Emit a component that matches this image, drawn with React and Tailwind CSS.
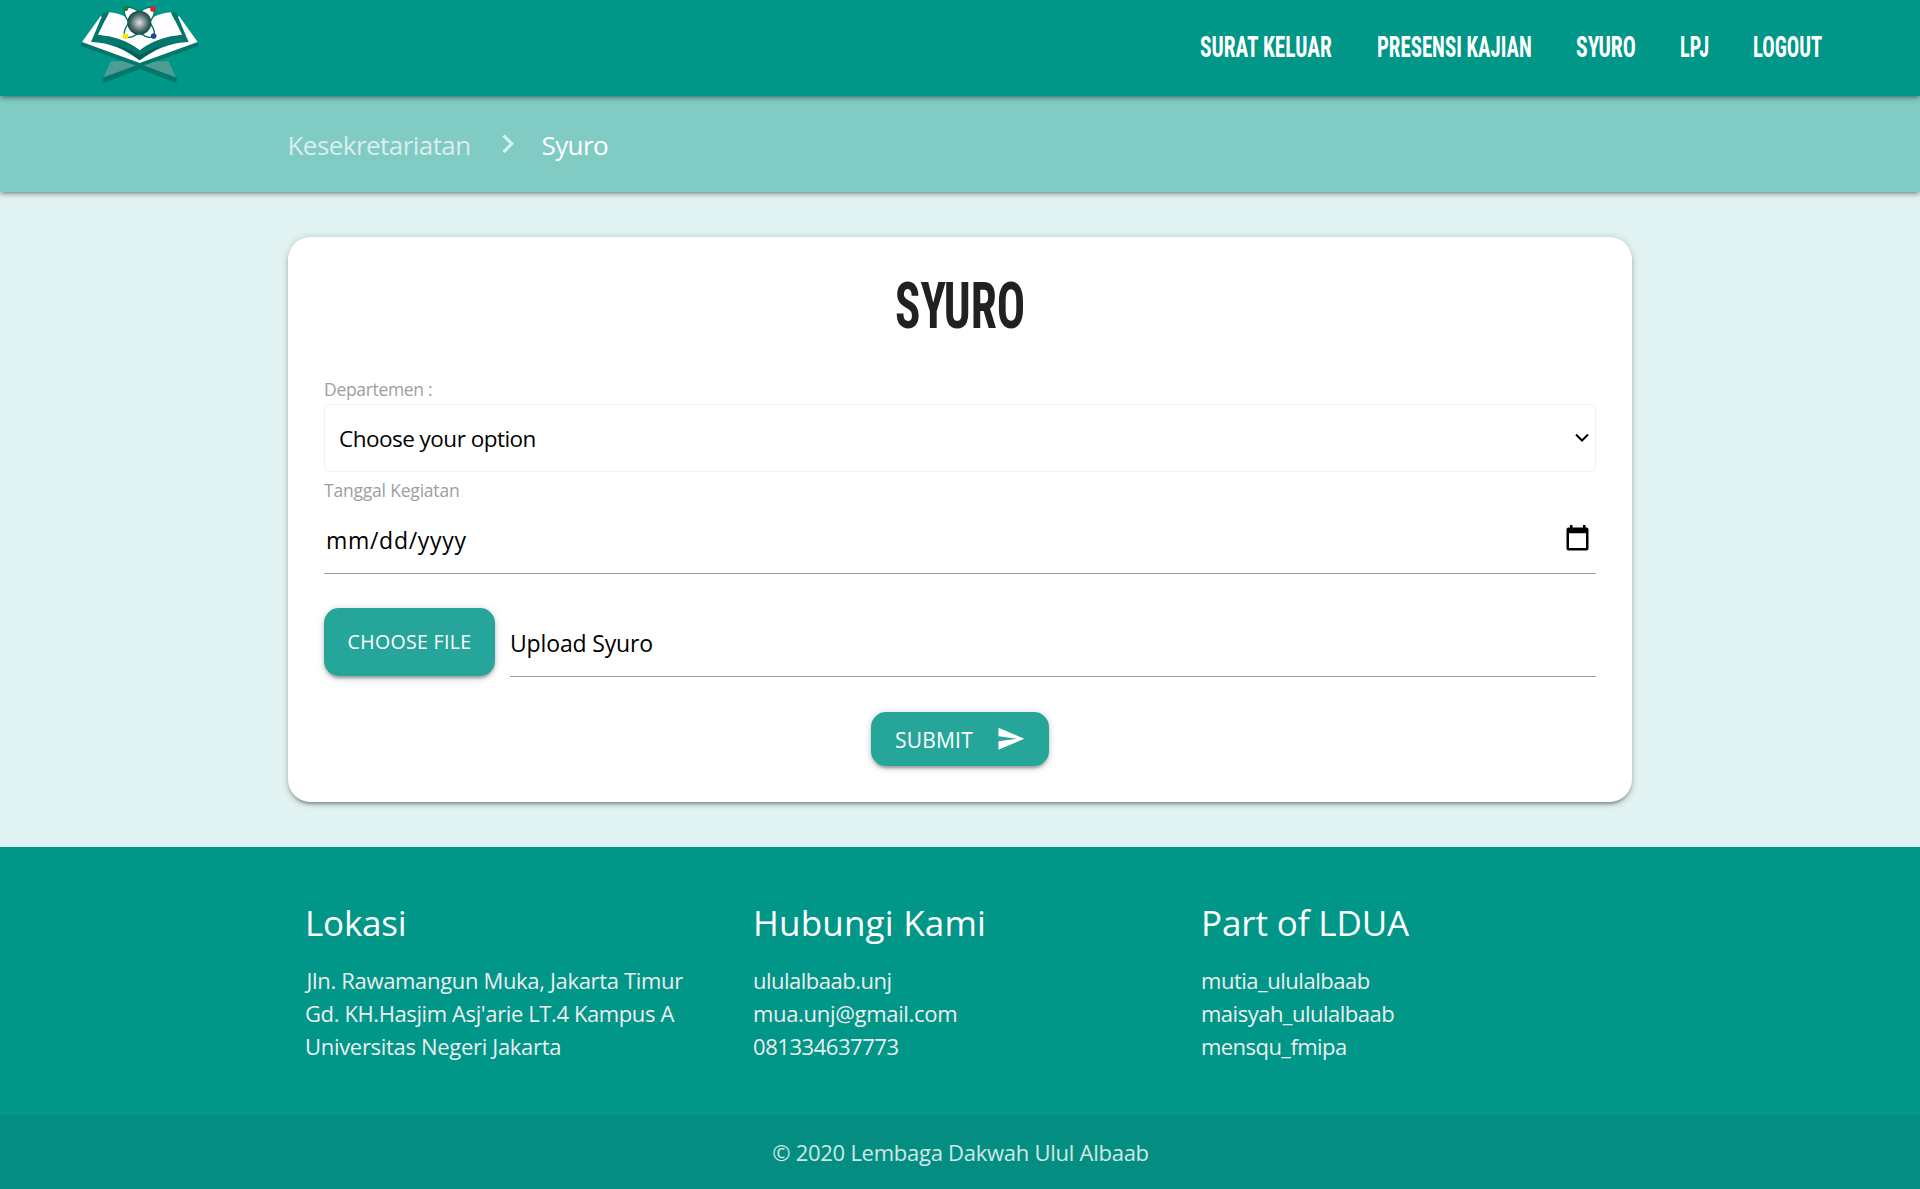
const navItems = [
  { label: "SURAT KELUAR", box: "w-[177px]", fit: "scale-x-[0.725]" },
  { label: "PRESENSI KAJIAN", box: "w-[198.5px]", fit: "scale-x-[0.707]" },
  { label: "SYURO", box: "w-[104px]", fit: "scale-x-[0.734]" },
  { label: "LPJ", box: "w-[73px]", fit: "scale-x-[0.684]" },
  { label: "LOGOUT", box: "w-[72px]", fit: "scale-x-[0.70]" },
];

const columns = [
  {
    title: "Lokasi",
    titleClass: "tracking-[-0.2px]",
    lines: [
      ["Jln. Rawamangun Muka, Jakarta Timur", "tracking-[-0.33px] pl-[1.5px]"],
      ["Gd. KH.Hasjim Asj'arie LT.4 Kampus A", "tracking-[-0.39px]"],
      ["Universitas Negeri Jakarta", "tracking-[-0.31px]"],
    ],
  },
  {
    title: "Hubungi Kami",
    titleClass: "tracking-[0.2px]",
    lines: [
      ["ululalbaab.unj", "tracking-[-0.5px]"],
      ["mua.unj@gmail.com", "tracking-[-0.32px]"],
      ["081334637773", "tracking-[-0.45px]"],
    ],
  },
  {
    title: "Part of LDUA",
    titleClass: "tracking-[-0.13px]",
    lines: [
      ["mutia_ululalbaab", "tracking-[-0.48px]"],
      ["maisyah_ululalbaab", "tracking-[-0.5px]"],
      ["mensqu_fmipa", "tracking-[-0.55px]"],
    ],
  },
];

function Logo() {
  return (
    <svg viewBox="60 0 360 288" className="h-24 w-[120px]">
      <defs>
        <radialGradient id="core" cx="0.5" cy="0.5" r="0.5">
          <stop offset="0" stopColor="#dfe5e4" />
          <stop offset="0.5" stopColor="#7d8b8a" />
          <stop offset="1" stopColor="#163f3c" />
        </radialGradient>
      </defs>
      {/* stand */}
      <path d="M152 184 L200 184 L248 204 L128 238 Z" fill="#4d9d94" />
      <path d="M326 184 L278 184 L230 204 L350 238 Z" fill="#4d9d94" />
      <path d="M127 233 L240 192 L351 233 L349 249 L239 207 L131 249 Z" fill="#04776c" />
      {/* cover */}
      <path d="M66 124 L239 184 L413 124 L417 138 L239 201 L62 138 Z" fill="#04776c" />
      {/* outer pages */}
      <path d="M122 48 L66 126 L239 189 L413 126 L357 48 L345 60 L135 60 Z" fill="#fff" />
      <path d="M131 37 L146 37 L115 104 L190 112 L239 150 L290 112 L366 104 L333 37 L348 37 L386 126 C330 128 285 148 239 181 C195 148 150 128 93 126 Z" fill="#04776c" />
      <path d="M160 134 Q206 146 239 166 Q272 146 318 134 Q276 150 239 181 Q202 150 160 134 Z" fill="#035e55" />
      {/* inner pages */}
      <path d="M148 37 C165 38 182 43 196 50 L282 50 C298 43 315 38 332 37 L365 104 C315 108 275 124 239 150 C205 124 165 108 114 104 Z" fill="#fff" />
      {/* atom */}
      <g fill="#fff" stroke="#04776c" strokeWidth="4">
        <ellipse cx="238" cy="67" rx="59" ry="24" transform="rotate(45 238 67)" />
        <ellipse cx="238" cy="67" rx="59" ry="24" transform="rotate(-45 238 67)" />
      </g>
      <circle cx="238" cy="68" r="36" fill="url(#core)" />
      <g fill="none" stroke="#04776c" strokeWidth="3" strokeOpacity="0.5">
        <ellipse cx="238" cy="67" rx="59" ry="24" transform="rotate(45 238 67)" />
        <ellipse cx="238" cy="67" rx="59" ry="24" transform="rotate(-45 238 67)" />
      </g>
      <circle cx="197" cy="25" r="8" fill="#1f7a35" />
      <circle cx="279" cy="27" r="8.5" fill="#d8232e" />
      <circle cx="196" cy="109" r="9" fill="#f4e51c" />
      <circle cx="281" cy="108" r="8.5" fill="#27409a" />
    </svg>
  );
}

export default function App() {
  return (
    <div className="flex h-[1189px] w-full flex-col bg-[#e0f2f1] font-['Open_Sans',sans-serif] whitespace-nowrap">
      <nav className="relative z-10 flex h-24 shrink-0 items-center justify-between bg-[#009688] pr-[95.5px] pl-20 shadow-[0_3px_3px_0_rgba(0,0,0,0.14),0_4.5px_1.5px_-3px_rgba(0,0,0,0.12),0_1.5px_7.5px_0_rgba(0,0,0,0.2)]">
        <Logo />
        <ul className="flex pb-[2px] font-['Roboto_Condensed',Roboto,sans-serif] text-[29.5px] leading-[94px] font-bold text-white">
          {navItems.map((n) => (
            <li key={n.label} className={n.box}>
              <span className={`inline-block origin-left ${n.fit}`}>{n.label}</span>
            </li>
          ))}
        </ul>
      </nav>

      <div className="flex h-24 shrink-0 items-center bg-[#80cbc4] pl-[287.5px] text-[26px] leading-[96px] shadow-[0_3px_3px_0_rgba(0,0,0,0.14),0_4.5px_1.5px_-3px_rgba(0,0,0,0.12),0_1.5px_7.5px_0_rgba(0,0,0,0.2)]">
        <span className="w-[201.5px] pt-[1px] tracking-[-0.55px] text-white/70">Kesekretariatan</span>
        <svg viewBox="0 0 24 24" className="mr-[15px] size-[37.5px] fill-white/70">
          <path d="M10 6L8.59 7.41 13.17 12l-4.58 4.59L10 18l6-6z" />
        </svg>
        <span className="pt-[1px] tracking-[-0.6px] text-white">Syuro</span>
      </div>

      <main className="mx-auto mt-[45px] h-[565px] w-[1344px] shrink-0 rounded-[22.5px] bg-white px-9 pt-9 shadow-[0_3px_3px_0_rgba(0,0,0,0.14),0_4.5px_1.5px_-3px_rgba(0,0,0,0.12),0_1.5px_7.5px_0_rgba(0,0,0,0.2)]">
        <h1 className="flex h-[66px] justify-center font-['Roboto_Condensed',Roboto,sans-serif] text-[64.5px] leading-[67px] font-bold text-[#212121]">
          <span className="inline-block scale-x-[0.73]">SYURO</span>
        </h1>

        <div className="mt-[37px] h-7 text-[17.5px] leading-[26px] tracking-[-0.32px] text-[#9e9e9e]">Departemen :</div>
        <div className="flex h-[68px] items-center justify-between rounded-[3px] border border-[#f2f2f2] pr-[5px] pl-[14px] text-[22.5px] text-black">
          <span className="pt-[2px] tracking-[-0.52px]">Choose your option</span>
          <svg viewBox="0 0 16 10" className="h-[10px] w-4 fill-none stroke-black stroke-2">
            <path d="M2 1.5 L8 7.5 L14 1.5" />
          </svg>
        </div>
        <div className="h-9 text-[17.5px] leading-9 tracking-[-0.2px] text-[#9e9e9e]">Tanggal Kegiatan</div>
        <div className="flex h-[66px] items-center justify-between border-b border-[#9e9e9e] pr-[7px] pl-[2px] text-[23px] text-black">
          <span className="tracking-[0.7px]">mm/dd/yyyy</span>
          <svg viewBox="0 0 23 26" className="mb-[5px] h-[26px] w-[23px]">
            <path d="M4 0h2.5v3H4zM17 0h2.5v3H17z" />
            <path fillRule="evenodd" d="M2.5 2.5h18a2 2 0 0 1 2 2v19a2 2 0 0 1-2 2h-18a2 2 0 0 1-2-2v-19a2 2 0 0 1 2-2zM3 8.3V23h17V8.3z" />
          </svg>
        </div>

        <div className="mt-[34px] flex h-[69px] gap-[15px]">
          <button className="h-[68px] w-[171px] rounded-[15px] bg-[#26a69a] text-[19.5px] tracking-[0.35px] text-white shadow-[0_3px_3px_0_rgba(0,0,0,0.14),0_4.5px_1.5px_-3px_rgba(0,0,0,0.12),0_1.5px_7.5px_0_rgba(0,0,0,0.2)]">
            CHOOSE FILE
          </button>
          <div className="flex-1 border-b border-[#9e9e9e] text-[23px] leading-[70px] tracking-[-0.15px] text-black">Upload Syuro</div>
        </div>

        <div className="mt-[35px] flex justify-center">
          <button className="flex h-[54px] w-[178px] items-center rounded-[15px] bg-[#26a69a] pl-6 text-[21px] text-white shadow-[0_3px_3px_0_rgba(0,0,0,0.14),0_4.5px_1.5px_-3px_rgba(0,0,0,0.12),0_1.5px_7.5px_0_rgba(0,0,0,0.2)]">
            <span className="w-[100.5px] pt-[3px] text-left tracking-[0.2px]">SUBMIT</span>
            <svg viewBox="0 0 24 24" className="size-[29.5px] fill-white">
              <path d="M2.01 21L23 12 2.01 3 2 10l15 2-15 2z" />
            </svg>
          </button>
        </div>
      </main>

      <footer className="mt-[45px] flex flex-1 flex-col bg-[#009688]">
        <div className="mx-auto grid h-[268px] w-[1344px] grid-cols-3 pt-14">
          {columns.map((c) => (
            <section key={c.title} className="pl-[17px]">
              <h5 className={`mb-[21px] text-[35px] leading-10 text-white ${c.titleClass}`}>{c.title}</h5>
              <ul className="text-[22px] leading-[33px] text-[#eeeeee]">
                {c.lines.map(([text, cls]) => (
                  <li key={text} className={cls}>{text}</li>
                ))}
              </ul>
            </section>
          ))}
        </div>
        <div className="flex-1 bg-[#333333]/8 pl-[1px] text-center text-[22px] leading-[74px] tracking-[-0.26px] text-white/80">
          © 2020 Lembaga Dakwah Ulul Albaab
        </div>
      </footer>
    </div>
  );
}
